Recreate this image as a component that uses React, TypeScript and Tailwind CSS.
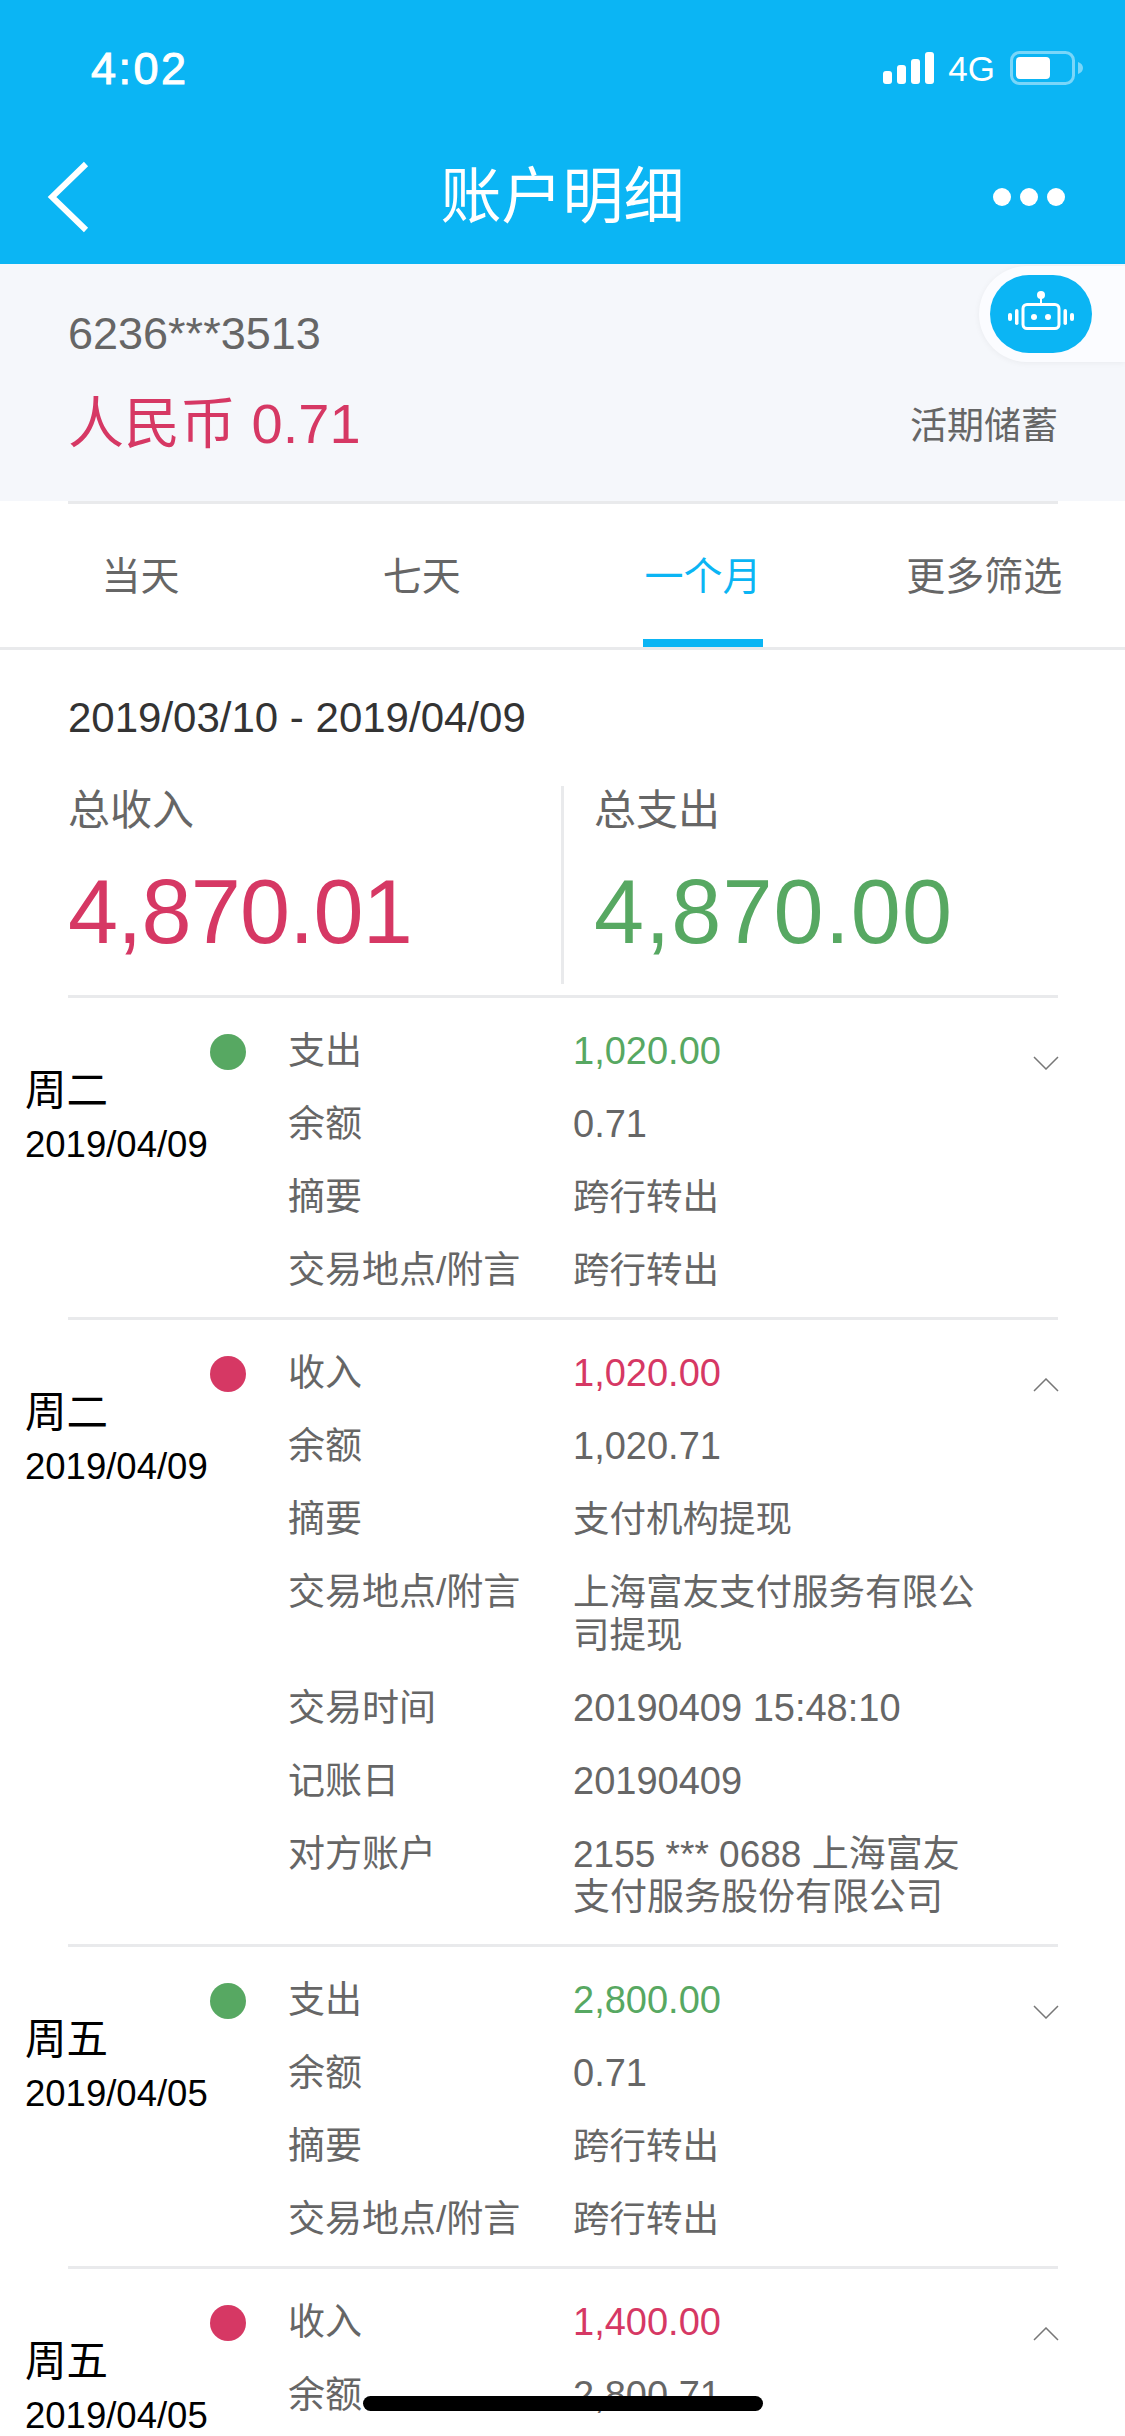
import React from 'react';

type Row = { label: string; value: string; tone?: 'in' | 'out' };
type Entry = { day: string; date: string; kind: 'in' | 'out'; open: boolean; rows: Row[] };

const entries: Entry[] = [
    {
        day: '周二',
        date: '2019/04/09',
        kind: 'out',
        open: false,
        rows: [
            { label: '支出', value: '1,020.00', tone: 'out' },
            { label: '余额', value: '0.71' },
            { label: '摘要', value: '跨行转出' },
            { label: '交易地点/附言', value: '跨行转出' },
        ],
    },
    {
        day: '周二',
        date: '2019/04/09',
        kind: 'in',
        open: true,
        rows: [
            { label: '收入', value: '1,020.00', tone: 'in' },
            { label: '余额', value: '1,020.71' },
            { label: '摘要', value: '支付机构提现' },
            { label: '交易地点/附言', value: '上海富友支付服务有限公司提现' },
            { label: '交易时间', value: '20190409 15:48:10' },
            { label: '记账日', value: '20190409' },
            { label: '对方账户', value: '2155 *** 0688 上海富友支付服务股份有限公司' },
        ],
    },
    {
        day: '周五',
        date: '2019/04/05',
        kind: 'out',
        open: false,
        rows: [
            { label: '支出', value: '2,800.00', tone: 'out' },
            { label: '余额', value: '0.71' },
            { label: '摘要', value: '跨行转出' },
            { label: '交易地点/附言', value: '跨行转出' },
        ],
    },
    {
        day: '周五',
        date: '2019/04/05',
        kind: 'in',
        open: true,
        rows: [
            { label: '收入', value: '1,400.00', tone: 'in' },
            { label: '余额', value: '2,800.71' },
        ],
    },
];

function StatusBar() {
    return (
        <div className="flex h-[136px] items-center justify-between pl-[91px] pr-[41px] text-white">
            <span className="text-[45px] leading-none tracking-[2.5px] [-webkit-text-stroke:1px_white]">4:02</span>
            <div className="flex items-center">
                <svg width="52" height="32" viewBox="0 0 52 32" fill="#fff">
                    <rect x="0" y="19" width="9" height="13" rx="3" />
                    <rect x="14" y="13" width="9" height="19" rx="3" />
                    <rect x="28" y="7" width="9" height="25" rx="3" />
                    <rect x="42" y="0" width="9" height="32" rx="3" />
                </svg>
                <span className="ml-[13px] text-[35px] leading-none">4G</span>
                <svg className="ml-[15px]" width="74" height="34" viewBox="0 0 74 34" fill="none">
                    <rect x="1.5" y="1.5" width="62" height="31" rx="8" stroke="#fff" strokeOpacity="0.45" strokeWidth="3" />
                    <rect x="6" y="6" width="34" height="22" rx="4" fill="#fff" />
                    <path d="M68 11c3 1 5 3 5 6s-2 5-5 6z" fill="#fff" fillOpacity="0.45" />
                </svg>
            </div>
        </div>
    );
}

function NavBar() {
    return (
        <div className="relative flex h-[122px] items-center justify-center">
            <svg className="absolute left-[46px] top-[25px]" width="44" height="72" viewBox="0 0 44 72" fill="none">
                <path d="M40 3L6 36l34 33" stroke="#fff" strokeWidth="6" />
            </svg>
            <span className="text-[61px] leading-none text-white">账户明细</span>
            <div className="absolute right-[60px] top-[52px] flex gap-[9px]">
                <div className="h-[18px] w-[18px] rounded-full bg-white" />
                <div className="h-[18px] w-[18px] rounded-full bg-white" />
                <div className="h-[18px] w-[18px] rounded-full bg-white" />
            </div>
        </div>
    );
}

function RobotButton() {
    return (
        <div className="absolute right-0 top-[2px] flex h-[96px] w-[146px] items-center rounded-l-[48px] bg-[#fbfcff] pl-[11px] shadow-[0_1px_6px_rgba(0,0,0,0.05)]">
            <div className="flex h-[78px] w-[102px] items-center justify-center rounded-[40px] bg-[#0bb5f4]">
                <svg width="70" height="46" viewBox="0 0 70 46" fill="none">
                    <circle cx="35" cy="4" r="4" fill="#fff" />
                    <path d="M35 7v7" stroke="#fff" strokeWidth="2" />
                    <rect x="17" y="13.5" width="36" height="24" rx="4" stroke="#fff" strokeWidth="3" />
                    <circle cx="28" cy="26" r="3" fill="#fff" />
                    <circle cx="42" cy="26" r="3" fill="#fff" />
                    <rect x="9" y="18" width="3.5" height="16" rx="1.75" fill="#fff" />
                    <rect x="57.5" y="18" width="3.5" height="16" rx="1.75" fill="#fff" />
                    <rect x="2" y="22" width="4" height="8" rx="2" fill="#fff" />
                    <rect x="64" y="22" width="4" height="8" rx="2" fill="#fff" />
                </svg>
            </div>
        </div>
    );
}

function AccountCard() {
    return (
        <div className="relative h-[237px] bg-[#f5f7fb] pl-[68px] pr-[67px]">
            <RobotButton />
            <div className="pt-[45px] text-[45px] leading-[50px] text-[#666]">6236***3513</div>
            <div className="mt-[33px] flex items-center justify-between">
                <span className="text-[56px] leading-[64px] text-[#d63864]">人民币 0.71</span>
                <span className="mt-[6px] text-[37px] leading-[44px] text-[#666]">活期储蓄</span>
            </div>
        </div>
    );
}

function Tabs() {
    const tabs = ['当天', '七天', '一个月', '更多筛选'];
    return (
        <div className="grid h-[146px] grid-cols-4 border-b-[3px] border-[#e9eaec] bg-white">
            {tabs.map((t, i) => (
                <div key={t} className="relative flex justify-center pt-[49px]">
                    <span className={`text-[39px] leading-[48px] ${i === 2 ? 'text-[#0bb5f4]' : 'text-[#666]'}`}>{t}</span>
                    {i === 2 && <div className="absolute bottom-0 left-[80px] h-[8px] w-[120px] bg-[#0bb5f4]" />}
                </div>
            ))}
        </div>
    );
}

function Summary() {
    return (
        <div className="ml-[68px] mr-[67px] border-b-[3px] border-[#e9eaec] pb-[11px]">
            <div className="pt-[43px] text-[42px] leading-[50px] text-[#333]">2019/03/10 - 2019/04/09</div>
            <div className="mt-[43px] flex h-[198px]">
                <div className="w-[496px] border-r-[3px] border-[#e9eaec]">
                    <div className="text-[42px] leading-[50px] text-[#666]">总收入</div>
                    <div className="mt-[26px] text-[90px] leading-[100px] tracking-[-0.8px] text-[#d63864]">4,870.01</div>
                </div>
                <div className="pl-[30px]">
                    <div className="text-[42px] leading-[50px] text-[#666]">总支出</div>
                    <div className="mt-[26px] text-[90px] leading-[100px] tracking-[1.1px] text-[#57a862]">4,870.00</div>
                </div>
            </div>
        </div>
    );
}

function Chevron({ up }: { up: boolean }) {
    return (
        <svg width="26" height="14" viewBox="0 0 26 14" fill="none" className="ml-auto mr-[66px] mt-[26px] shrink-0">
            <path d={up ? 'M1 13L13 1l12 12' : 'M1 1l12 12L25 1'} stroke="#777" strokeWidth="1.5" />
        </svg>
    );
}

function valueClass(r: Row) {
    const size = /^[\d,.: ]+$/.test(r.value) ? 'text-[38px]' : /^\d/.test(r.value) ? 'text-[37px]' : 'text-[36.5px]';
    const color = r.tone === 'in' ? 'text-[#d63864]' : r.tone === 'out' ? 'text-[#57a862]' : 'text-[#666]';
    return `w-[415px] ${size} ${color}`;
}

function EntryRow({ entry, last }: { entry: Entry; last: boolean }) {
    return (
        <div className="relative">
            <div className="flex pb-[25px] pt-[32px]">
                <div className="w-[210px] shrink-0 pl-[25px] pt-[34px]">
                    <div className="text-[41.5px] leading-[54px] text-black">{entry.day}</div>
                    <div className="mt-[9px] text-[36.5px] leading-[36px] text-black">{entry.date}</div>
                </div>
                <div className={`mt-[4px] h-[36px] w-[36px] shrink-0 rounded-full ${entry.kind === 'in' ? 'bg-[#d63864]' : 'bg-[#57a862]'}`} />
                <div className="ml-[42px] flex flex-col gap-[30px]">
                    {entry.rows.map((r) => (
                        <div key={r.label} className="flex text-[37px] leading-[43px]">
                            <div className="w-[285px] shrink-0 text-[#666]">{r.label}</div>
                            <div className={valueClass(r)}>{r.value}</div>
                        </div>
                    ))}
                </div>
                <Chevron up={entry.open} />
            </div>
            {!last && <div className="ml-[68px] mr-[67px] h-[3px] bg-[#e9eaec]" />}
        </div>
    );
}

export default function App() {
    return (
        <div className="relative h-[2436px] w-[1125px] overflow-hidden bg-white font-['Liberation_Sans','Noto_Sans_CJK_SC',sans-serif]">
            <div className="h-[264px] bg-[#0bb5f4]">
                <StatusBar />
                <NavBar />
            </div>
            <AccountCard />
            <div className="ml-[68px] mr-[67px] h-[3px] bg-[#e9eaec]" />
            <Tabs />
            <Summary />
            {entries.map((e, i) => (
                <EntryRow key={i} entry={e} last={i === entries.length - 1} />
            ))}
            <div className="absolute bottom-[25px] left-[363px] h-[15px] w-[400px] rounded-full bg-black" />
        </div>
    );
}
